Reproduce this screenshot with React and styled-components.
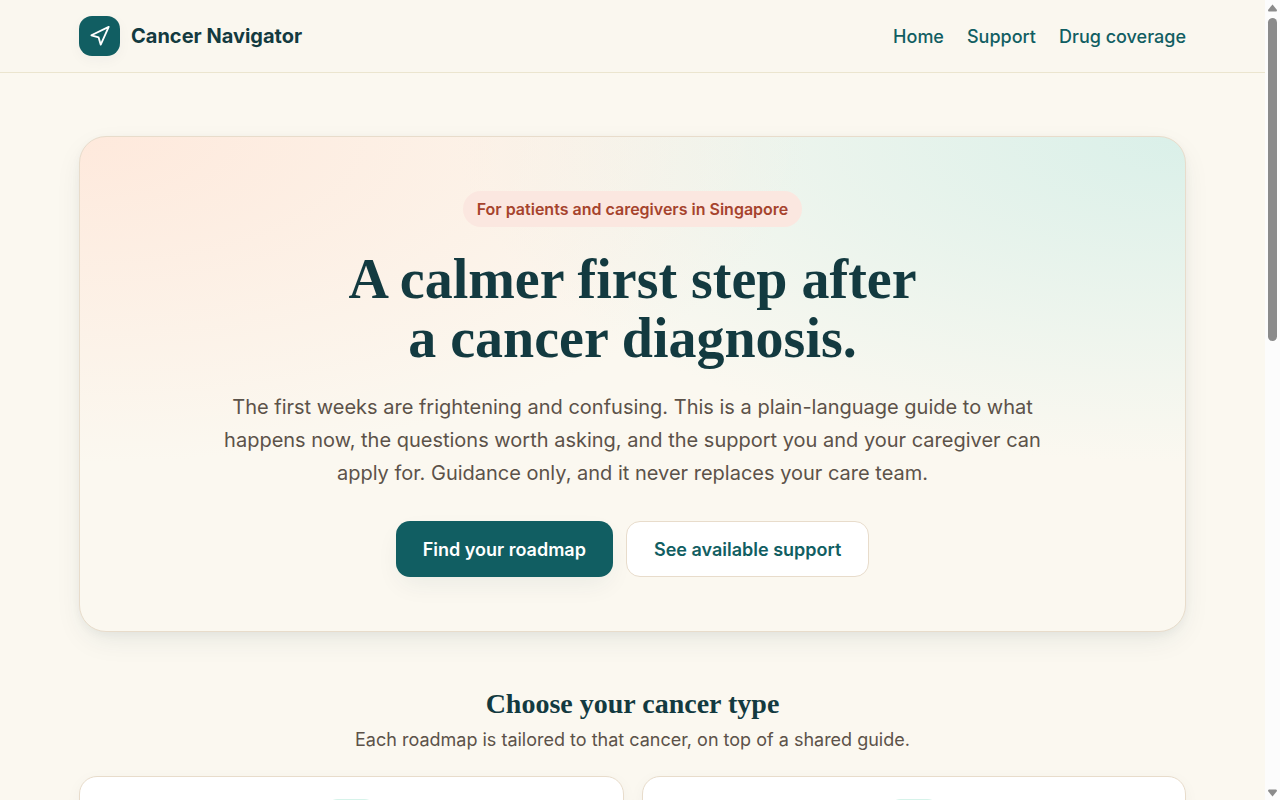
import React from 'react'
import styled, { createGlobalStyle } from 'styled-components'

const App = () => {
  return (
    <Screen>
      <GlobalStyle />
      <Content>
        <Header>
          <HeaderInner>
            <Brand href="#home">
              <LogoBox>
                <svg width="22" height="22" viewBox="0 0 24 24" fill="none" stroke="currentColor" strokeWidth="2" strokeLinecap="round" strokeLinejoin="round" aria-hidden="true">
                  <path d="M21.5 2 2.6 11.2l7.9 2.4 2.3 7.8z" />
                </svg>
              </LogoBox>
              Cancer Navigator
            </Brand>
            <Nav>
              <NavLink href="#home">Home</NavLink>
              <NavLink href="#support">Support</NavLink>
              <NavLink href="#drugs">Drug coverage</NavLink>
            </Nav>
          </HeaderInner>
        </Header>
        <Main>
          <Hero>
            <Badge>For patients and caregivers in Singapore</Badge>
            <Title>A calmer first step after<br />a cancer diagnosis.</Title>
            <Intro>
              The first weeks are frightening and confusing. This is a plain-language guide to what
              happens now, the questions worth asking, and the support you and your caregiver can
              apply for. Guidance only, and it never replaces your care team.
            </Intro>
            <Actions>
              <PrimaryButton type="button">Find your roadmap</PrimaryButton>
              <SecondaryButton type="button">See available support</SecondaryButton>
            </Actions>
          </Hero>
          <SectionHead>
            <SectionTitle>Choose your cancer type</SectionTitle>
            <SectionText>Each roadmap is tailored to that cancer, on top of a shared guide.</SectionText>
          </SectionHead>
          <Cards>
            <Card><CardIcon /></Card>
            <Card><CardIcon /></Card>
          </Cards>
        </Main>
      </Content>
      <ScrollTrack aria-hidden="true">
        <Arrow viewBox="0 0 9 8"><path d="M4.5 .5 9 6Q9 7.5 8 7.5H1Q0 7.5 0 6z" /></Arrow>
        <ScrollThumb />
        <Arrow viewBox="0 0 9 8"><path d="M4.5 7.5 9 2Q9 .5 8 .5H1Q0 .5 0 2z" /></Arrow>
      </ScrollTrack>
    </Screen>
  )
}

export default App

const GlobalStyle = createGlobalStyle`
  * {
    box-sizing: border-box;
  }

  body {
    margin: 0;
    background: #fbf8f0;
    color: #133a40;
    font-family: Inter, "Liberation Sans", sans-serif;
    font-size: 18px;
  }
`;

const Screen = styled.div`
  height: 100vh;
  display: flex;
  overflow: hidden;
`;

const Content = styled.div`
  flex: 1;
  min-width: 0;
  overflow: hidden;
`;

const Header = styled.header`
  background: #faf7ef;
  border-bottom: 1px solid #ebe5cf;
`;

const HeaderInner = styled.div`
  max-width: 1151px;
  margin: 0 auto;
  padding: 16px 22px;
  display: flex;
  align-items: center;
  justify-content: space-between;
`;

const Brand = styled.a`
  display: flex;
  align-items: center;
  gap: 11px;
  color: #133a40;
  font-size: 20px;
  font-weight: 700;
  text-decoration: none;
`;

const LogoBox = styled.span`
  width: 41px;
  height: 40px;
  border-radius: 13px;
  background: #115e62;
  color: #ffffff;
  display: flex;
  align-items: center;
  justify-content: center;
  box-shadow: 0 4px 14px rgba(19, 58, 64, 0.04);
`;

const Nav = styled.nav`
  display: flex;
  gap: 23px;
`;

const NavLink = styled.a`
  color: #115e62;
  font-size: 18px;
  font-weight: 500;
  text-decoration: none;
`;

const Main = styled.main`
  max-width: 1151px;
  margin: 0 auto;
  padding: 63px 22px;
`;

const Hero = styled.section`
  border: 1px solid #e8dccb;
  border-radius: 27px;
  padding: 54px;
  display: flex;
  flex-direction: column;
  align-items: center;
  text-align: center;
  background:
    radial-gradient(120% 120% at 0% 0%, #fee9dc 0%, rgba(254, 233, 220, 0) 55%),
    radial-gradient(120% 120% at 100% 0%, #daf0e9 0%, rgba(218, 240, 233, 0) 55%),
    #fbf8f0;
  box-shadow: 0 10px 30px -6px rgba(19, 58, 64, 0.1), 0 3px 8px rgba(19, 58, 64, 0.04);
`;

const Badge = styled.span`
  border-radius: 18px;
  padding: 0 14px;
  background: #fbe7e0;
  color: #a6432d;
  font-size: 16px;
  font-weight: 600;
  line-height: 36px;
`;

const Title = styled.h1`
  margin: 23px 0;
  font-family: "Liberation Serif", serif;
  font-size: 56px;
  font-weight: 700;
  line-height: 59px;
`;

const Intro = styled.p`
  max-width: 832px;
  margin: 0 0 31px;
  color: #5c5249;
  font-size: 20px;
  line-height: 33px;
`;

const Actions = styled.div`
  display: flex;
  gap: 13px;
`;

const PrimaryButton = styled.button`
  height: 56px;
  padding: 0 27px;
  border: none;
  border-radius: 14px;
  background: #115e62;
  color: #ffffff;
  font-family: inherit;
  font-size: 18px;
  font-weight: 600;
  cursor: pointer;
  box-shadow: 0 10px 26px -4px rgba(19, 58, 64, 0.07);
`;

const SecondaryButton = styled(PrimaryButton)`
  border: 1px solid #e8dccb;
  background: #ffffff;
  color: #115e62;
  box-shadow: none;
`;

const SectionHead = styled.div`
  margin: 54px 0 22px;
  text-align: center;
`;

const SectionTitle = styled.h2`
  margin: 0 0 4px;
  font-family: "Liberation Serif", serif;
  font-size: 28px;
  font-weight: 700;
  line-height: 36px;
`;

const SectionText = styled.p`
  margin: 0;
  color: #5c5249;
  font-size: 18px;
  line-height: 28px;
`;

const Cards = styled.div`
  display: grid;
  grid-template-columns: 1fr 1fr;
  gap: 18px;
`;

const Card = styled.article`
  min-height: 220px;
  border: 1px solid #e8dccb;
  border-radius: 18px;
  padding: 22px;
  background: #ffffff;
  display: flex;
  flex-direction: column;
  align-items: center;
  box-shadow: 0 4px 16px rgba(19, 58, 64, 0.04);
`;

const CardIcon = styled.span`
  width: 54px;
  height: 54px;
  border-radius: 14px;
  background: #d6f3ea;
`;

const ScrollTrack = styled.div`
  width: 15px;
  padding: 4px 0 3px;
  background: #fcfcfc;
  display: flex;
  flex-direction: column;
  align-items: center;
`;

const Arrow = styled.svg`
  width: 9px;
  height: 8px;
  fill: #8b8b8b;

  &:last-child {
    margin-top: auto;
  }
`;

const ScrollThumb = styled.div`
  width: 9px;
  height: 323px;
  margin-top: 6px;
  border-radius: 5px;
  background: #8b8b8b;
`;
